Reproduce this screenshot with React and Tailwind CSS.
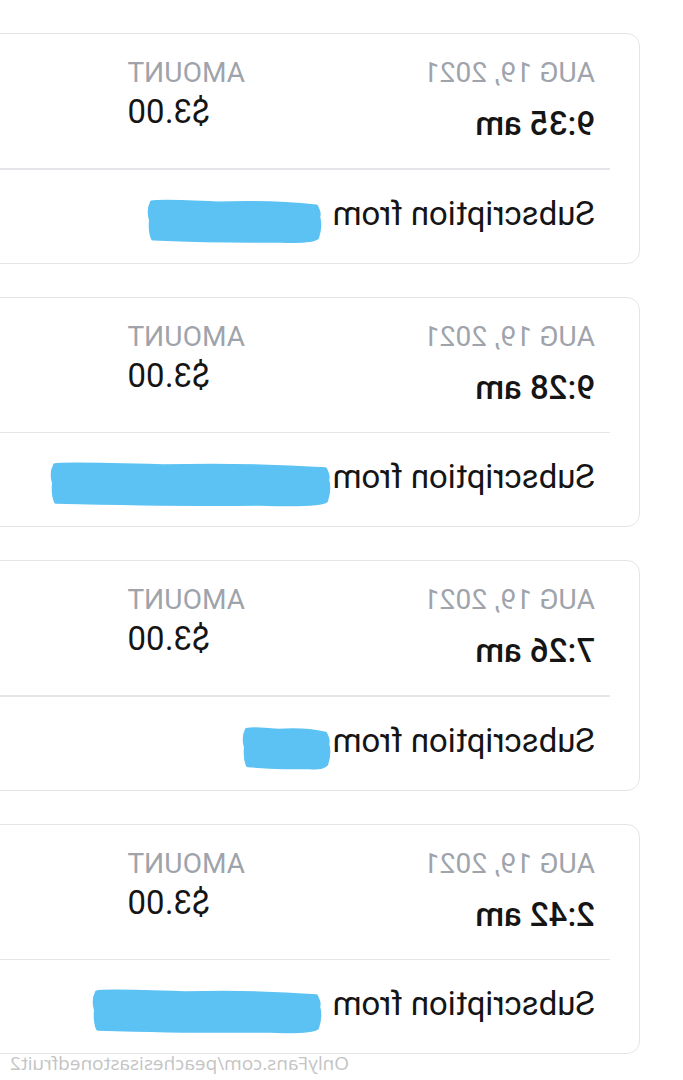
import React from "react";

const rows = [
  { date: "AUG 19, 2021", time: "9:35 am", amount: "$3.00", blot: { w: 176, gap: 9 } },
  { date: "AUG 19, 2021", time: "9:28 am", amount: "$3.00", blot: { w: 282, gap: 0 } },
  { date: "AUG 19, 2021", time: "7:26 am", amount: "$3.00", blot: { w: 90, gap: 0 } },
  { date: "AUG 19, 2021", time: "2:42 am", amount: "$3.00", blot: { w: 231, gap: 9 } },
];

function Blot({ w }) {
  const h = 46;
  const d = `M 5 8 Q ${w * 0.3} 3 ${w * 0.6} 5 Q ${w - 10} 2 ${w - 3} 4 Q ${w + 1} 12 ${w - 2} 22 Q ${w - 1} 34 ${w - 4} ${h - 5} Q ${w * 0.55} ${h - 2} ${w * 0.25} ${h - 3} Q 10 ${h - 1} 4 ${h - 6} Q 0 ${h * 0.6} 3 ${h * 0.4} Q 1 16 5 8 Z`;
  return (
    <svg width={w} height={h} viewBox={`-2 0 ${w + 4} ${h}`} className="shrink-0 mt-[4px]">
      <path d={d} fill="#5bc2f3" stroke="#5bc2f3" strokeWidth="4" strokeLinejoin="round" />
    </svg>
  );
}

function Card({ r }) {
  return (
    <div className="w-[680px] rounded-[13px] border-[1.5px] border-[#e4e5e9] bg-white">
      <div className="flex pt-[22px] pb-[24px]">
        <div className="w-[394px] pl-[44px]">
          <div className="text-[28px] leading-[33px] text-[#9fa3ab] tracking-[0.2px]">{r.date}</div>
          <div className="mt-[15px] text-[33px] leading-[40px] font-medium text-[#151515]">{r.time}</div>
        </div>
        <div className="flex flex-col items-end">
          <div className="text-[28px] leading-[33px] text-[#9fa3ab] tracking-[0.2px]">AMOUNT</div>
          <div className="mt-[3px] text-[33px] leading-[40px] text-[#151515]">{r.amount}</div>
        </div>
      </div>
      <div className="ml-[29px] h-[1.5px] bg-[#e4e5e9]" />
      <div className="flex h-[40px] items-start mt-[24px] mb-[29px] pl-[44px]">
        <div className="text-[33px] leading-[40px] text-[#151515] whitespace-nowrap">Subscription from</div>
        <div className="h-[40px]" style={{ marginLeft: r.blot.gap }}>
          <Blot w={r.blot.w} />
        </div>
      </div>
    </div>
  );
}

export default function App() {
  return (
    <div className="relative w-[683px] h-[1080px] overflow-hidden bg-white font-[Roboto,sans-serif] [transform:scaleX(-1)]">
      <div className="pt-[33px] pl-[43px] flex flex-col gap-[33px]">
        {rows.map((r, i) => (
          <Card key={i} r={r} />
        ))}
      </div>
      <div className="mt-[-1px] pr-[10px] text-right font-['Open_Sans',sans-serif] text-[19px] leading-[20px] text-[#c4c4c4]">
        OnlyFans.com/peachesisastonedfruit2
      </div>
    </div>
  );
}
